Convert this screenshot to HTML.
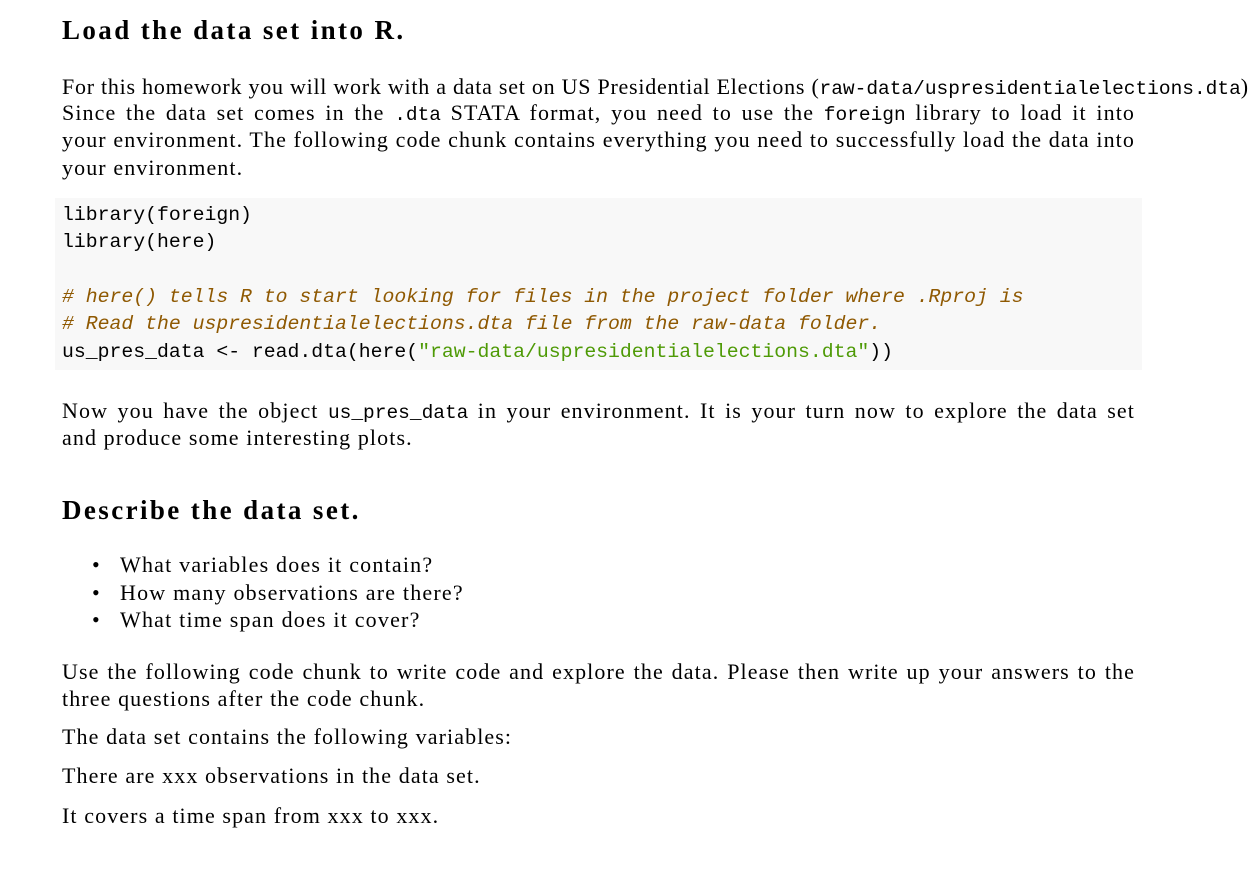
<!DOCTYPE html>
<html><head><meta charset="utf-8"><style>
body{margin:0;width:1259px;height:873px;background:#fff;position:relative;overflow:hidden;font-family:"Liberation Serif",serif;color:#000}
.l{position:absolute;left:62px;font-size:22px;letter-spacing:1.1px;line-height:27px;white-space:nowrap}
.j{width:1073px;text-align:justify;text-align-last:justify}
.m{font-family:"Liberation Mono",monospace;font-size:19.5px;letter-spacing:0}
h1,h2{position:absolute;left:62px;margin:0;font-size:27px;letter-spacing:2.4px;font-weight:bold;line-height:30px;white-space:nowrap}
.code{position:absolute;left:55px;top:198px;width:1087px;height:172px;background:#f8f8f8}
.c{position:absolute;left:62px;font-family:"Liberation Mono",monospace;font-size:19.8px;line-height:27px;white-space:pre}
.cm{color:#8f5902;font-style:italic}
.s{color:#4e9a06}
.b{position:absolute;left:92px;font-size:22px;letter-spacing:1.2px;line-height:27px;white-space:nowrap}
.b span{position:absolute;left:28px}
</style></head><body>
<h1 style="top:15px">Load the data set into R.</h1>
<div class="l" style="top:73px;letter-spacing:0.75px">For this homework you will work with a data set on US Presidential Elections (<span class="m">raw-data/uspresidentialelections.dta</span>)</div>
<div class="l j" style="top:99px">Since the data set comes in the <span class="m">.dta</span> STATA format, you need to use the <span class="m">foreign</span> library to load it into</div>
<div class="l j" style="top:126px">your environment. The following code chunk contains everything you need to successfully load the data into</div>
<div class="l" style="top:154px">your environment.</div>
<div class="code"></div>
<div class="c" style="top:202px">library(foreign)</div>
<div class="c" style="top:229px">library(here)</div>
<div class="c cm" style="top:284px"># here() tells R to start looking for files in the project folder where .Rproj is</div>
<div class="c cm" style="top:311px"># Read the uspresidentialelections.dta file from the raw-data folder.</div>
<div class="c" style="top:339px">us_pres_data &lt;- read.dta(here(<span class="s">"raw-data/uspresidentialelections.dta"</span>))</div>
<div class="l j" style="top:397px">Now you have the object <span class="m">us_pres_data</span> in your environment. It is your turn now to explore the data set</div>
<div class="l" style="top:424px">and produce some interesting plots.</div>
<h2 style="top:495px">Describe the data set.</h2>
<div class="b" style="top:551px">•<span>What variables does it contain?</span></div>
<div class="b" style="top:579px">•<span>How many observations are there?</span></div>
<div class="b" style="top:606px">•<span>What time span does it cover?</span></div>
<div class="l j" style="top:658px">Use the following code chunk to write code and explore the data. Please then write up your answers to the</div>
<div class="l" style="top:685px">three questions after the code chunk.</div>
<div class="l" style="top:723px">The data set contains the following variables:</div>
<div class="l" style="top:762px">There are xxx observations in the data set.</div>
<div class="l" style="top:802px">It covers a time span from xxx to xxx.</div>
</body></html>
